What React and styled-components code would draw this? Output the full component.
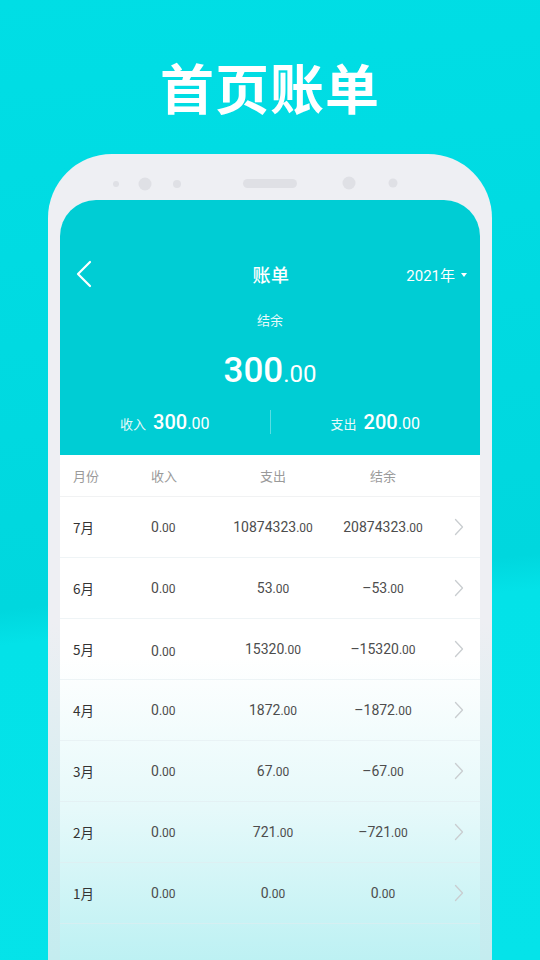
import React from "react";
import styled, { createGlobalStyle } from "styled-components";

const GlobalStyle = createGlobalStyle`
  html, body {
    margin: 0;
    padding: 0;
  }
  body {
    font-family: "Noto Sans CJK SC", "Noto Sans", sans-serif;
  }
`;

const Page = styled.div`
  width: 540px;
  height: 960px;
  overflow: hidden;
  display: flex;
  flex-direction: column;
  align-items: center;
  background: linear-gradient(
    174deg,
    #00dee5 0%,
    #00d7de 60%,
    #03e2e8 63.5%,
    #05e3e9 100%
  );
`;

const Headline = styled.h1`
  margin: 57px 0 0;
  font-size: 54px;
  line-height: 60px;
  font-weight: 700;
  letter-spacing: 1px;
  color: #ffffff;
  font-family: "Noto Sans CJK SC", sans-serif;
`;

const Phone = styled.div`
  margin-top: 37px;
  width: 444px;
  flex: 1;
  box-sizing: border-box;
  padding: 0 12px;
  display: flex;
  flex-direction: column;
  border-radius: 64px 64px 0 0;
  background: linear-gradient(180deg, #eeeff3 0%, #eeeff3 58%, #c4ecef 100%);
`;

const SensorBar = styled.svg`
  display: block;
  width: 444px;
  height: 46px;
  margin: 0 -12px;
  flex-shrink: 0;
`;

const Screen = styled.div`
  flex: 1;
  display: flex;
  flex-direction: column;
  border-radius: 36px 36px 0 0;
  overflow: hidden;
  background: #ffffff;
`;

const Header = styled.div`
  height: 255px;
  flex-shrink: 0;
  background: #00cdd4;
  color: #ffffff;
  display: flex;
  flex-direction: column;
  align-items: center;
  padding-top: 56px;
  box-sizing: border-box;
`;

const NavBar = styled.div`
  width: 100%;
  height: 36px;
  display: grid;
  grid-template-columns: 1fr auto 1fr;
  align-items: center;
  padding: 0 13px 0 15px;
  box-sizing: border-box;
`;

const BackButton = styled.svg`
  width: 18px;
  height: 28px;
  justify-self: start;
`;

const NavTitle = styled.div`
  font-size: 18px;
  font-weight: 500;
  letter-spacing: 0.5px;
`;

const YearPicker = styled.div`
  justify-self: end;
  display: flex;
  align-items: center;
  gap: 6px;
  font-size: 15px;
  font-family: "Roboto", "Noto Sans CJK SC", sans-serif;
`;

const Caret = styled.span`
  width: 0;
  height: 0;
  border-left: 3.5px solid transparent;
  border-right: 3.5px solid transparent;
  border-top: 4px solid #ffffff;
  margin-top: 2px;
`;

const BalanceLabel = styled.div`
  margin-top: 18px;
  font-size: 13px;
  opacity: 0.92;
`;

const Amount = styled.div`
  margin-top: 24px;
  font-family: "Roboto", sans-serif;
  font-weight: 500;
  font-size: ${({ size }) => size}px;
  line-height: 1;
  display: flex;
  align-items: baseline;
`;

const Cents = styled.span`
  font-size: ${({ size }) => size}px;
  font-weight: 400;
`;

const Totals = styled.div`
  margin-top: 22px;
  width: 100%;
  display: grid;
  grid-template-columns: 1fr 1px 1fr;
  align-items: center;
`;

const TotalItem = styled.div`
  display: flex;
  align-items: baseline;
  justify-content: center;
  gap: 7px;
`;

const TotalLabel = styled.span`
  font-size: 13px;
  opacity: 0.9;
`;

const TotalValue = styled.span`
  font-family: "Roboto", sans-serif;
  font-size: 20px;
  font-weight: 500;
`;

const TotalCents = styled.span`
  font-size: 16px;
  font-weight: 400;
`;

const Divider = styled.div`
  width: 1px;
  height: 24px;
  background: rgba(255, 255, 255, 0.35);
`;

const Table = styled.div`
  flex: 1;
  display: flex;
  flex-direction: column;
  background: linear-gradient(
    180deg,
    #ffffff 0%,
    #ffffff 40%,
    #e6f9fa 70%,
    #bdf1f3 100%
  );
`;

const Row = styled.div`
  display: grid;
  grid-template-columns: 78px 80px 84px 136px 1fr;
  align-items: center;
  height: ${({ head }) => (head ? 42 : 61)}px;
  padding-left: 13px;
  border-bottom: 1px solid
    ${({ head }) => (head ? "#f1f2f3" : "rgba(225, 235, 238, 0.55)")};
  box-sizing: border-box;
`;

const HeadCell = styled.div`
  font-size: 13px;
  color: #9a9a9a;
  text-align: ${({ center }) => (center ? "center" : "left")};
  white-space: nowrap;
`;

const MonthCell = styled.div`
  font-size: 13.5px;
  font-weight: 400;
  color: #333333;
  font-family: "Noto Sans CJK SC", sans-serif;
`;

const NumCell = styled.div`
  font-family: "Roboto", sans-serif;
  font-size: 14px;
  color: #4d4d4d;
  text-align: ${({ center }) => (center ? "center" : "left")};
  white-space: nowrap;
  margin-top: ${({ drop }) => drop || 0}px;
`;

const NumCents = styled.span`
  font-size: 12px;
`;

const Chevron = styled.svg`
  width: 10px;
  height: 18px;
  margin-left: 3px;
`;

const rows = [
  { m: "7月", inc: "0", exp: "10874323", bal: "20874323" },
  { m: "6月", inc: "0", exp: "53", bal: "–53" },
  { m: "5月", inc: "0", exp: "15320", bal: "–15320", drop: 4 },
  { m: "4月", inc: "0", exp: "1872", bal: "–1872" },
  { m: "3月", inc: "0", exp: "67", bal: "–67" },
  { m: "2月", inc: "0", exp: "721", bal: "–721" },
  { m: "1月", inc: "0", exp: "0", bal: "0" },
];

const Num = ({ v, center, drop }) => (
  <NumCell center={center} drop={drop}>
    {v}
    <NumCents>.00</NumCents>
  </NumCell>
);

const App = () => (
  <>
    <GlobalStyle />
    <Page>
      <Headline>首页账单</Headline>
      <Phone>
        <SensorBar viewBox="0 0 444 46">
          <circle cx="68" cy="30" r="3" fill="#dfe0e5" />
          <circle cx="97" cy="30" r="6.5" fill="#dfe0e5" />
          <circle cx="129" cy="30" r="4" fill="#dfe0e5" />
          <rect x="195" y="25" width="54" height="9" rx="4.5" fill="#dfe0e5" />
          <circle cx="301" cy="29" r="6.5" fill="#dfe0e5" />
          <circle cx="345" cy="29" r="4.5" fill="#dfe0e5" />
        </SensorBar>
        <Screen>
          <Header>
            <NavBar>
              <BackButton viewBox="0 0 18 28">
                <path
                  d="M15 2 L3 14 L15 26"
                  fill="none"
                  stroke="#ffffff"
                  strokeWidth="2.2"
                  strokeLinecap="round"
                  strokeLinejoin="round"
                />
              </BackButton>
              <NavTitle>账单</NavTitle>
              <YearPicker>
                2021年
                <Caret />
              </YearPicker>
            </NavBar>
            <BalanceLabel>结余</BalanceLabel>
            <Amount size={35}>
              300<Cents size={24}>.00</Cents>
            </Amount>
            <Totals>
              <TotalItem>
                <TotalLabel>收入</TotalLabel>
                <TotalValue>
                  300<TotalCents>.00</TotalCents>
                </TotalValue>
              </TotalItem>
              <Divider />
              <TotalItem>
                <TotalLabel>支出</TotalLabel>
                <TotalValue>
                  200<TotalCents>.00</TotalCents>
                </TotalValue>
              </TotalItem>
            </Totals>
          </Header>
          <Table>
            <Row head>
              <HeadCell>月份</HeadCell>
              <HeadCell>收入</HeadCell>
              <HeadCell center>支出</HeadCell>
              <HeadCell center>结余</HeadCell>
              <span />
            </Row>
            {rows.map((r) => (
              <Row key={r.m}>
                <MonthCell>{r.m}</MonthCell>
                <Num v={r.inc} drop={r.drop} />
                <Num v={r.exp} center />
                <Num v={r.bal} center />
                <Chevron viewBox="0 0 10 18">
                  <path
                    d="M1.5 1.5 L8.5 9 L1.5 16.5"
                    fill="none"
                    stroke="#c9cdd0"
                    strokeWidth="1.3"
                    strokeLinecap="round"
                    strokeLinejoin="round"
                  />
                </Chevron>
              </Row>
            ))}
          </Table>
        </Screen>
      </Phone>
    </Page>
  </>
);

export default App;
